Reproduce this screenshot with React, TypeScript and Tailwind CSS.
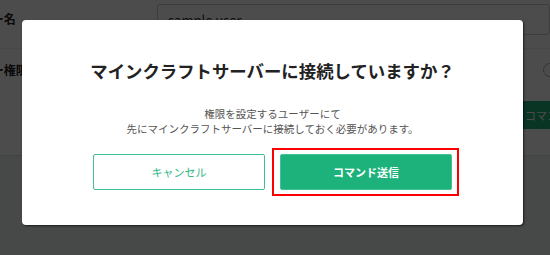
import React from "react";

export default function App() {
  return (
    <div className="relative w-[550px] h-[255px] overflow-hidden bg-[#eef0f2] font-['Noto_Sans_CJK_JP','Noto_Sans',sans-serif]">
      {/* underlying page */}
      <div className="h-[156px] bg-white border-b border-[#dddddd]">
        <div className="-ml-[44px] flex flex-col">
          <div className="flex items-start h-[48px]">
            <div className="w-[201px] pt-[10px] text-[12px] leading-[18px] font-bold text-[#222]">ユーザー名</div>
            <div className="mt-[4px] h-[31px] flex-1 border border-[#cccccc] rounded-[3px] px-[10px] flex items-center text-[13px] text-[#333] whitespace-nowrap">
              sample user
            </div>
          </div>
          <div className="flex items-center h-[42px] border-t border-[#eeeeee]">
            <div className="w-[201px] text-[12px] font-bold text-[#222]">ユーザー権限</div>
            <div className="flex-1 flex items-center justify-end">
              <div className="-mr-[7px] w-[14px] h-[14px] rounded-full border border-[#aaaaaa] bg-white" />
            </div>
          </div>
          <div className="flex justify-end mt-[11px]">
            <div className="w-[240px] -mr-[40px] h-[28px] bg-[#1db27b] text-white text-[11px] flex items-center pl-[175px] whitespace-nowrap">
              コマンド送信
            </div>
          </div>
        </div>
      </div>

      {/* overlay */}
      <div className="absolute inset-0 bg-black/70 pt-[20px] pl-[22px]">
        <div className="w-[501px] h-[205px] bg-white rounded-[4px] shadow-[1px_1px_2px_rgba(0,0,0,0.6)] flex flex-col items-center">
          <h2 className="pt-[38px] text-[17.4px] leading-[26px] font-bold text-[#222]">
            マインクラフトサーバーに接続していますか？
          </h2>
          <div className="mt-[22px] text-[10.5px] leading-[15px] text-[#555] text-center">
            <p>権限を設定するユーザーにて</p>
            <p>先にマインクラフトサーバーに接続しておく必要があります。</p>
          </div>
          <div className="mt-[18px] flex gap-[15px]">
            <button className="w-[172px] h-[36px] border border-[#41c08f] rounded-[2px] bg-white text-[#33b786] text-[11px]">
              キャンセル
            </button>
            <div className="relative">
              <button className="w-[172px] h-[36px] rounded-[2px] bg-[#1db27b] border border-[#3cc493] text-white text-[11px] font-bold">
                コマンド送信
              </button>
              <div className="absolute left-[-8px] right-[-7px] top-[-6px] bottom-[-6px] border-2 border-[#ff0000]" />
            </div>
          </div>
        </div>
      </div>
    </div>
  );
}
